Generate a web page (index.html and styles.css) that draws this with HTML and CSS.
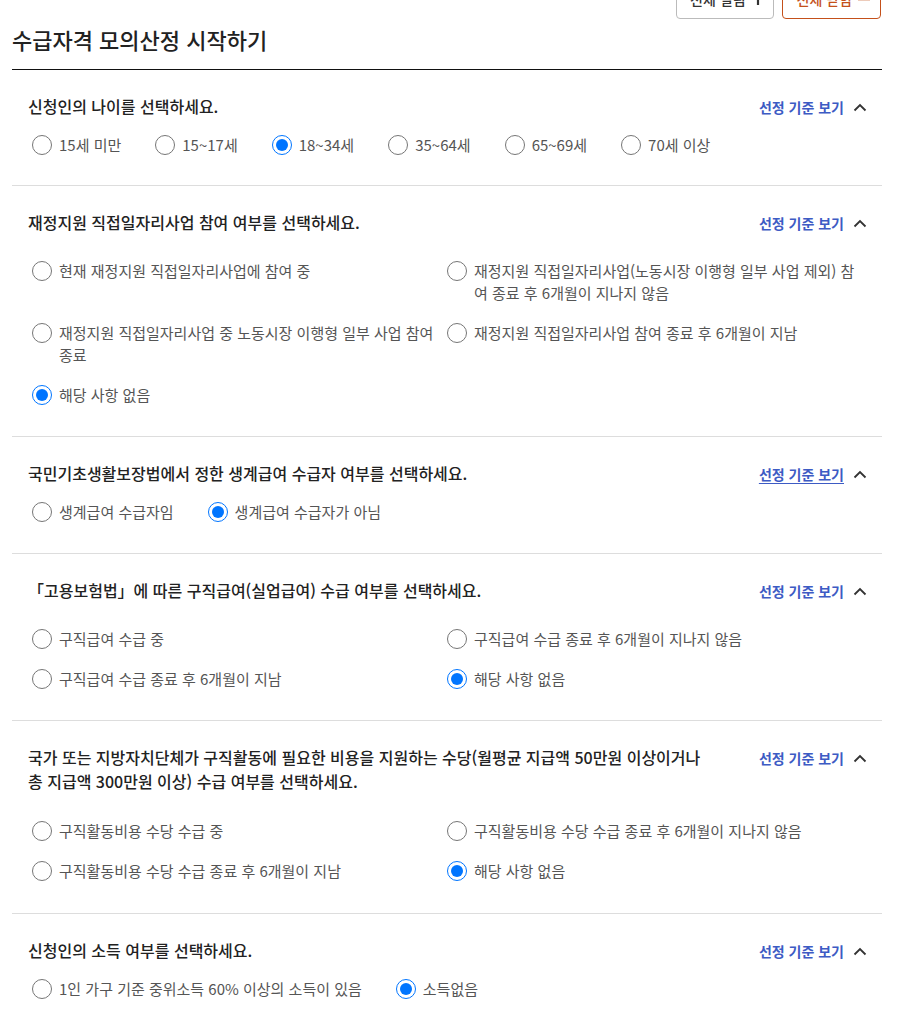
FILE: index.html
```html
<!DOCTYPE html>
<html lang="ko">

<head>
    <meta charset="UTF-8">
    <meta name="viewport" content="width=device-width, initial-scale=1.0">
    <title>수급자격 모의산정 시작하기</title>
    <link rel="stylesheet" href="styles.css">
</head>

<body>
    <div class="wrap">
        <!-- 전체 열림/닫힘 버튼 -->
        <div class="toolbar">
            <button class="tool-btn">전체 열림
                <svg width="12" height="12" viewBox="0 0 12 12"><path d="M6 0v12M0 6h12" stroke="#333" stroke-width="2.2"/></svg>
            </button>
            <button class="tool-btn tool-btn-close">전체 닫힘
                <svg width="12" height="12" viewBox="0 0 12 12"><path d="M0 6h12" stroke="#c4501a" stroke-width="2.6"/></svg>
            </button>
        </div>

        <h2 class="page-title">수급자격 모의산정 시작하기</h2>

        <!-- 1. 나이 -->
        <div class="question">
            <div class="q-head">
                <p class="q-title">신청인의 나이를 선택하세요.</p>
                <a class="q-link" href="#">선정 기준 보기
                    <svg width="14" height="9" viewBox="0 0 14 9"><path d="M1.5 7.5L7 2l5.5 5.5" fill="none" stroke="#333" stroke-width="1.8"/></svg>
                </a>
            </div>
            <div class="opts-inline">
                <label class="opt"><input type="radio" name="age"><span>15세 미만</span></label>
                <label class="opt"><input type="radio" name="age"><span>15~17세</span></label>
                <label class="opt"><input type="radio" name="age" checked><span>18~34세</span></label>
                <label class="opt"><input type="radio" name="age"><span>35~64세</span></label>
                <label class="opt"><input type="radio" name="age"><span>65~69세</span></label>
                <label class="opt"><input type="radio" name="age"><span>70세 이상</span></label>
            </div>
        </div>

        <!-- 2. 직접일자리사업 -->
        <div class="question">
            <div class="q-head">
                <p class="q-title">재정지원 직접일자리사업 참여 여부를 선택하세요.</p>
                <a class="q-link" href="#">선정 기준 보기
                    <svg width="14" height="9" viewBox="0 0 14 9"><path d="M1.5 7.5L7 2l5.5 5.5" fill="none" stroke="#333" stroke-width="1.8"/></svg>
                </a>
            </div>
            <div class="opts-grid">
                <label class="opt"><input type="radio" name="job"><span>현재 재정지원 직접일자리사업에 참여 중</span></label>
                <label class="opt"><input type="radio" name="job"><span>재정지원 직접일자리사업(노동시장 이행형 일부 사업 제외) 참여 종료 후 6개월이 지나지 않음</span></label>
                <label class="opt"><input type="radio" name="job"><span>재정지원 직접일자리사업 중 노동시장 이행형 일부 사업 참여 종료</span></label>
                <label class="opt"><input type="radio" name="job"><span>재정지원 직접일자리사업 참여 종료 후 6개월이 지남</span></label>
                <label class="opt"><input type="radio" name="job" checked><span>해당 사항 없음</span></label>
            </div>
        </div>

        <!-- 3. 생계급여 -->
        <div class="question">
            <div class="q-head">
                <p class="q-title">국민기초생활보장법에서 정한 생계급여 수급자 여부를 선택하세요.</p>
                <a class="q-link q-link-hover" href="#">선정 기준 보기
                    <svg width="14" height="9" viewBox="0 0 14 9"><path d="M1.5 7.5L7 2l5.5 5.5" fill="none" stroke="#333" stroke-width="1.8"/></svg>
                </a>
            </div>
            <div class="opts-inline">
                <label class="opt"><input type="radio" name="life"><span>생계급여 수급자임</span></label>
                <label class="opt"><input type="radio" name="life" checked><span>생계급여 수급자가 아님</span></label>
            </div>
        </div>

        <!-- 4. 구직급여 -->
        <div class="question">
            <div class="q-head">
                <p class="q-title">「고용보험법」에 따른 구직급여(실업급여) 수급 여부를 선택하세요.</p>
                <a class="q-link" href="#">선정 기준 보기
                    <svg width="14" height="9" viewBox="0 0 14 9"><path d="M1.5 7.5L7 2l5.5 5.5" fill="none" stroke="#333" stroke-width="1.8"/></svg>
                </a>
            </div>
            <div class="opts-grid">
                <label class="opt"><input type="radio" name="ui"><span>구직급여 수급 중</span></label>
                <label class="opt"><input type="radio" name="ui"><span>구직급여 수급 종료 후 6개월이 지나지 않음</span></label>
                <label class="opt"><input type="radio" name="ui"><span>구직급여 수급 종료 후 6개월이 지남</span></label>
                <label class="opt"><input type="radio" name="ui" checked><span>해당 사항 없음</span></label>
            </div>
        </div>

        <!-- 5. 구직활동 수당 -->
        <div class="question question-long">
            <div class="q-head">
                <p class="q-title">국가 또는 지방자치단체가 구직활동에 필요한 비용을 지원하는 수당(월평균 지급액 50만원 이상이거나 총 지급액 300만원 이상) 수급 여부를 선택하세요.</p>
                <a class="q-link" href="#">선정 기준 보기
                    <svg width="14" height="9" viewBox="0 0 14 9"><path d="M1.5 7.5L7 2l5.5 5.5" fill="none" stroke="#333" stroke-width="1.8"/></svg>
                </a>
            </div>
            <div class="opts-grid">
                <label class="opt"><input type="radio" name="allow"><span>구직활동비용 수당 수급 중</span></label>
                <label class="opt"><input type="radio" name="allow"><span>구직활동비용 수당 수급 종료 후 6개월이 지나지 않음</span></label>
                <label class="opt"><input type="radio" name="allow"><span>구직활동비용 수당 수급 종료 후 6개월이 지남</span></label>
                <label class="opt"><input type="radio" name="allow" checked><span>해당 사항 없음</span></label>
            </div>
        </div>

        <!-- 6. 소득 -->
        <div class="question">
            <div class="q-head">
                <p class="q-title">신청인의 소득 여부를 선택하세요.</p>
                <a class="q-link" href="#">선정 기준 보기
                    <svg width="14" height="9" viewBox="0 0 14 9"><path d="M1.5 7.5L7 2l5.5 5.5" fill="none" stroke="#333" stroke-width="1.8"/></svg>
                </a>
            </div>
            <div class="opts-inline">
                <label class="opt"><input type="radio" name="income"><span>1인 가구 기준 중위소득 60% 이상의 소득이 있음</span></label>
                <label class="opt"><input type="radio" name="income" checked><span>소득없음</span></label>
            </div>
        </div>
    </div>
</body>

</html>
```

FILE: styles.css
```css
/* 기본 여백 제거 및 글꼴 */
body,
html {
    margin: 0;
    padding: 0;
    font-family: "Noto Sans CJK KR", "Noto Sans", sans-serif;
    color: #222;
    background: #fff;
}

/* 전체 컨테이너 */
.wrap {
    width: 870px;
    margin-left: 12px;
}

/* 상단 버튼 영역 */
.toolbar {
    display: flex;
    justify-content: flex-end;
    gap: 8px;
    margin-top: -22px;
    margin-right: 1px;
}

.tool-btn {
    display: flex;
    align-items: center;
    gap: 6px;
    height: 41px;
    padding: 0 9px 0 13px;
    border: 1px solid #bbb;
    border-radius: 4px;
    background: #fff;
    font-family: inherit;
    font-size: 14px;
    font-weight: 500;
    color: #333;
}

.tool-btn-close {
    padding: 0 10px 0 14px;
    border-color: #c4501a;
    color: #c4501a;
}

/* 페이지 제목 */
.page-title {
    margin: 0;
    padding: 4px 0 13px;
    font-size: 22px;
    line-height: 33px;
    font-weight: 500;
    color: #222;
    border-bottom: 1px solid #111;
}

/* 질문 블록 */
.question {
    padding: 24px 15px 30px 16px;
    border-bottom: 1px solid #ddd;
}

/* 첫 번째 질문은 1px 짧게 */
.page-title + .question {
    padding-bottom: 29px;
}

/* 두 줄 제목 질문 */
.question-long {
    padding-bottom: 31px;
}

.q-head {
    display: flex;
    justify-content: space-between;
    align-items: flex-start;
}

.q-title {
    margin: 0;
    max-width: 685px;
    font-size: 16px;
    line-height: 24px;
    font-weight: 500;
    color: #222;
    word-break: keep-all;
}

.question-long .q-title {
    margin-bottom: 1px;
}

.q-link {
    display: flex;
    align-items: center;
    gap: 9px;
    margin-top: 2px;
    font-size: 14px;
    line-height: 22px;
    font-weight: 700;
    color: #3d5bc4;
    text-decoration: none;
    white-space: nowrap;
}

.q-link-hover {
    text-decoration: underline;
    text-underline-offset: 3px;
}

/* 라디오 옵션 */
.opt {
    display: flex;
    align-items: flex-start;
    gap: 7px;
    font-size: 15px;
    line-height: 22px;
    color: #555;
}

.opt input {
    flex: none;
    width: 20px;
    height: 20px;
    margin: 1px 0 0 0;
}

/* 가로 한 줄 옵션 */
.opts-inline {
    display: flex;
    gap: 34px;
    margin-top: 16px;
    padding-left: 4px;
}

/* 2열 옵션 */
.opts-grid {
    display: grid;
    grid-template-columns: 415px 1fr;
    row-gap: 18px;
    margin-top: 26px;
    padding-left: 4px;
}
```
